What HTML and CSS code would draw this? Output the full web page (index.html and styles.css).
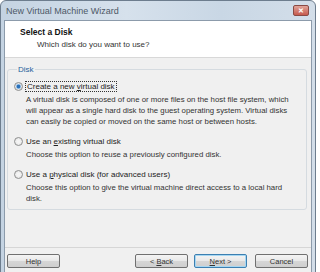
FILE: index.html
```html
<!DOCTYPE html>
<html lang="en">
<head>
    <meta charset="UTF-8">
    <title>New Virtual Machine Wizard</title>
    <link rel="stylesheet" href="styles.css">
</head>
<body>
    <div class="window">
        <div class="titlebar">
            <span class="title">New Virtual Machine Wizard</span>
            <span class="close">&#x2715;</span>
        </div>

        <div class="client">
            <!-- Header -->
            <div class="header">
                <div class="heading">Select a Disk</div>
                <div class="subheading">Which disk do you want to use?</div>
            </div>

            <!-- Options -->
            <div class="content">
                <fieldset class="group">
                    <legend>Disk</legend>

                    <div class="option">
                        <label class="choice"><span class="radio checked"></span><span class="focus">Create a new <u>v</u>irtual disk</span></label>
                        <p class="desc">A virtual disk is composed of one or more files on the host file system, which will appear as a single hard disk to the guest operating system. Virtual disks can easily be copied or moved on the same host or between hosts.</p>
                    </div>

                    <div class="option">
                        <label class="choice"><span class="radio"></span><span>Use an <u>e</u>xisting virtual disk</span></label>
                        <p class="desc">Choose this option to reuse a previously configured disk.</p>
                    </div>

                    <div class="option">
                        <label class="choice"><span class="radio"></span><span>Use a <u>p</u>hysical disk (for advanced users)</span></label>
                        <p class="desc">Choose this option to give the virtual machine direct access to a local hard disk.</p>
                    </div>
                </fieldset>
            </div>

            <!-- Buttons -->
            <div class="footer">
                <button class="btn">Help</button>
                <div class="nav">
                    <button class="btn">&lt; <u>B</u>ack</button>
                    <button class="btn default"><u>N</u>ext &gt;</button>
                    <button class="btn cancel">Cancel</button>
                </div>
            </div>
        </div>
    </div>
</body>
</html>
```

FILE: styles.css
```css
* {
    box-sizing: border-box;
    margin: 0;
    padding: 0;
}

body {
    background: #ffffff;
    font-family: "Liberation Sans", Arial, sans-serif;
    font-size: 8px;
    color: #222;
}

.window {
    width: 316px;
    height: 280px;
    background: linear-gradient(90deg, #c4d3e2 0%, #d6e1ec 40%, #c9d7e5 70%, #d3dee9 100%);
    border: 1px solid #6d7d8e;
    border-radius: 6px 6px 0 0;
    padding: 0 3px;
    display: flex;
    flex-direction: column;
}

.titlebar {
    height: 19px;
    display: flex;
    align-items: center;
    justify-content: space-between;
    padding: 0 1px 0 2px;
}

.title {
    font-size: 9px;
    color: #4d5866;
}

.close {
    width: 16px;
    height: 11px;
    background: linear-gradient(#e0a49a, #c65a4d);
    border: 1px solid #8a4a44;
    border-radius: 2px;
    color: #fff;
    font-size: 7px;
    font-weight: bold;
    line-height: 9px;
    text-align: center;
    margin-right: 2px;
}

.client {
    flex: 1;
    background: #f0f0f0;
    border: 1px solid #8c9bab;
    display: flex;
    flex-direction: column;
}

.header {
    background: #fff;
    height: 37px;
    border-bottom: 1px solid #d8d8d8;
    padding: 6px 0 0 15px;
}

.heading {
    font-size: 8.5px;
    font-weight: bold;
    color: #111;
}

.subheading {
    font-size: 8px;
    color: #333;
    margin: 3px 0 0 17px;
}

.content {
    height: 190px;
    padding: 7px 4px 0 2px;
    border-bottom: 1px solid #d6d6d6;
}

.group {
    border: 1px solid #d5dbe0;
    border-radius: 3px;
    padding: 6px 13px 8px 6px;
    height: 145px;
}

.group legend {
    color: #1f5f9c;
    padding: 0 1px;
    margin-left: 3px;
    font-size: 8px;
}

.option {
    margin-bottom: 8px;
}

.choice {
    display: flex;
    align-items: center;
    gap: 3px;
    height: 12px;
}

.radio {
    width: 9px;
    height: 9px;
    border-radius: 50%;
    border: 1px solid #8e8f8f;
    background: radial-gradient(circle, #f4f4f4 30%, #dcdcdc 100%);
    display: inline-block;
}

.radio.checked {
    background: radial-gradient(circle, #2a70b8 0 28%, #9cc3e8 45%, #e4e4e4 60%);
}

.focus {
    outline: 1px dotted #333;
    padding: 0 1px;
}

.desc {
    margin: 2px 0 0 12px;
    line-height: 11px;
    font-size: 7.8px;
    color: #333;
}

.footer {
    display: flex;
    justify-content: space-between;
    padding: 6px 3px 0 2px;
}

.nav {
    display: flex;
    gap: 6px;
}

.btn {
    width: 53px;
    height: 14px;
    font-family: "Liberation Sans", Arial, sans-serif;
    font-size: 7.5px;
    color: #333;
    background: linear-gradient(#f4f4f4 0%, #e8e8e8 50%, #d6d6d6 51%, #cfcfcf 100%);
    border: 1px solid #707070;
    border-radius: 2px;
}

.btn.default {
    border-color: #3c7fb1;
    box-shadow: inset 0 0 0 1px #a6d7f2;
}

.nav .cancel {
    margin-left: 2px;
}
```
